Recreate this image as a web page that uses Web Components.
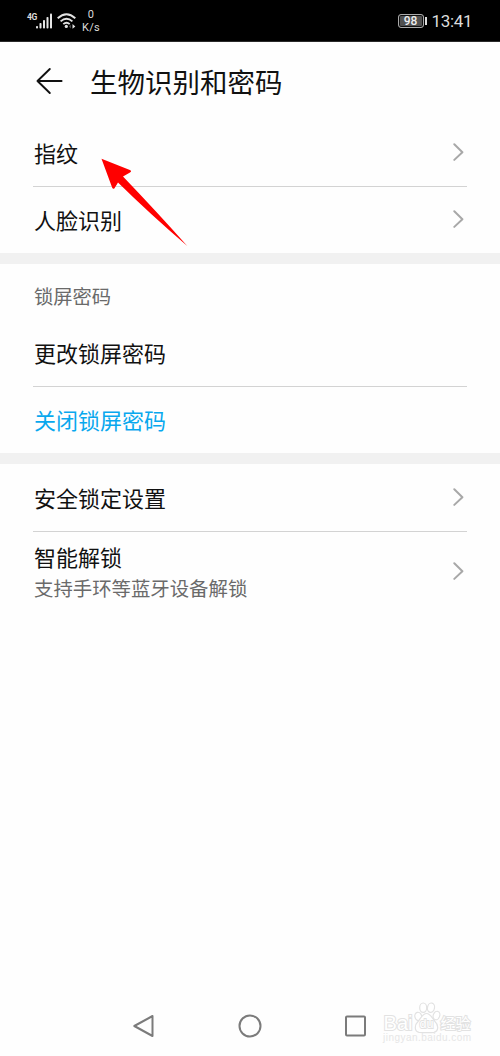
<!DOCTYPE html>
<html lang="zh-CN">
<head>
<meta charset="utf-8">
<title>生物识别和密码</title>
<style>
html,body{margin:0;height:100%}
body{background:#fefefe;font-family:"Noto Sans CJK SC",sans-serif;color:#111;overflow:hidden}
</style>
</head>
<body>
<settings-screen></settings-screen>
<script>
const define = (name, html) => customElements.define(name, class extends HTMLElement {
  constructor() {
    super();
    const t = document.createElement('template');
    t.innerHTML = html;
    this.attachShadow({mode: 'open'}).append(t.content.cloneNode(true));
  }
});

define('status-bar', `<style>
:host{display:flex;box-sizing:border-box;height:42px;flex:none;background:#000;color:#dcdcdc;font-family:Roboto,sans-serif;padding:0 29px 0 27px;justify-content:space-between;border-bottom:1px solid #2a2a2a}
.side{display:flex;align-items:center;height:41px}
.net{display:flex;flex-direction:column;align-items:center;font-size:11px;line-height:13px;margin-left:6px;padding-top:1px;letter-spacing:.3px}
.g{font-size:8.5px;font-weight:700;line-height:10px;align-self:flex-start;margin-top:12px;width:9px;letter-spacing:-.4px}
.sig{margin-top:1px}
.wifi{margin:0 0 0 4px}
.bat{box-sizing:border-box;width:26px;height:14px;border:1px solid #aaa;border-radius:3px;background:#505050;box-shadow:inset 0 0 0 1px #111;font-size:12px;font-weight:500;line-height:12px;text-align:center;color:#eee}
.cap{width:2px;height:8px;background:#ddd;margin:0 5px 0 1px}
.time{font-size:17px;line-height:20px;padding-top:1px;width:39.5px;white-space:nowrap;letter-spacing:-.35px}
</style>
<div class="side"><span class="g">4G</span>
<svg class="sig" width="17" height="18" viewBox="0 0 17 18" fill="#e6e6e6"><rect x="0" y="14" width="2" height="2.5" rx=".8"/><rect x="3.5" y="11" width="2" height="5.5" rx=".8"/><rect x="7" y="8" width="2" height="8.5" rx=".8"/><rect x="10.5" y="5" width="2" height="11.5" rx=".8"/><rect x="14" y="1.5" width="2" height="15" rx=".8"/></svg>
<svg class="wifi" width="19" height="18" viewBox="0 0 19 18" fill="none" stroke="#e2e2e2" stroke-width="1.9"><path d="M.7 6.2Q9.5-1.8 18.3 6.2M3.6 9.4Q9.5 4 15.4 9.4M6.3 12.1Q9.5 9.3 12.7 12.1"/><circle cx="9.3" cy="14.4" r="1.6" fill="#e2e2e2" stroke="none"/><path d="M13.8 12.5v4L12 14.5z" fill="#555" stroke="none"/><path d="M15.5 12l2.8 2.4-2.8 2.4z" fill="#e2e2e2" stroke="none"/></svg>
<div class="net"><span>0</span><span>K/s</span></div></div>
<div class="side"><span class="bat">98</span><span class="cap"></span><span class="time">13:41</span></div>`);

define('title-bar', `<style>
:host{display:flex;height:78px;flex:none;align-items:center;padding-left:36px}
h1{margin:0 0 0 27px;font-size:27.5px;line-height:40px;font-weight:400;color:#111}
</style>
<svg width="27" height="28" viewBox="0 0 27 28" fill="none" stroke="#111" stroke-width="1.9" stroke-linecap="round" stroke-linejoin="round"><path d="M25.6 14H1.5M13.8 2L1.5 14l12.3 12"/></svg>
<h1><slot></slot></h1>`);

define('chevron-icon', `<style>:host{display:block;width:12px;height:18px}svg{display:block}</style>
<svg width="12" height="18" viewBox="0 0 12 18" fill="none" stroke="#a8a8a8" stroke-width="2" stroke-linecap="round" stroke-linejoin="round"><path d="M1.3 1.3L9.4 9.2l-8.1 7.7"/></svg>`);

define('setting-row', `<style>
:host{display:flex;box-sizing:border-box;height:66px;align-items:center;justify-content:space-between;margin:0 33px;padding:0 2px 2px 1px;font-size:22px;line-height:30px}
:host([accent]){color:#08a8ee}
:host([tall]){height:67px}
:host([detail]){height:80px;padding-bottom:0}
.text{display:flex;flex-direction:column}
::slotted([slot=detail]){display:block;margin-top:1px;font-size:19.4px;line-height:32px;color:#6a6a6a}
:host(:not([link])) chevron-icon{display:none}
:host([detail]) chevron-icon{margin-bottom:3px}
</style>
<div class="text"><slot></slot><slot name="detail"></slot></div><chevron-icon></chevron-icon>`);

define('row-divider', `<style>:host{display:block;height:1px;margin:0 33px;background:#d3d3d3}</style>`);
define('section-gap', `<style>:host{display:block;height:11px;background:#f1f1f1}</style>`);
define('section-label', `<style>:host{display:flex;box-sizing:border-box;height:56px;align-items:center;padding:8px 34px 0;font-size:19.3px;line-height:28px;color:#6a6a6a}</style><slot></slot>`);

define('nav-bar', `<style>
:host{display:grid;height:60px;flex:none;grid-template-columns:repeat(3,106px);justify-content:center;align-items:center;justify-items:center}
</style>
<svg width="24" height="26" viewBox="0 0 24 26" fill="none" stroke="#7b7b7b" stroke-width="2" stroke-linejoin="round"><path d="M20.5 3v20L2.3 13z"/></svg>
<svg width="26" height="26" viewBox="0 0 26 26" fill="none" stroke="#7b7b7b" stroke-width="2"><circle cx="13" cy="13" r="10.5"/></svg>
<svg width="24" height="24" viewBox="0 0 24 24" fill="none" stroke="#7b7b7b" stroke-width="2"><rect x="2" y="2.5" width="19" height="19" rx="1"/></svg>`);

define('baidu-mark', `<style>
:host{position:absolute;left:380px;top:998px;width:96px;height:50px}
svg{display:block;overflow:visible}
text{font-family:"Liberation Sans",sans-serif;paint-order:stroke}
</style>
<svg width="96" height="50" viewBox="0 0 96 50" fill="#fff" stroke="#e2e2e2" stroke-width="2">
<text x="3.5" y="31.5" font-size="20" font-weight="400" textLength="29" lengthAdjust="spacingAndGlyphs">Bai</text>
<g stroke-width="1.2"><ellipse cx="38.3" cy="18.5" rx="3.4" ry="4.3" transform="rotate(-15 38.3 18.5)"/><ellipse cx="43.2" cy="9.7" rx="3.5" ry="4.7"/><ellipse cx="51" cy="9.7" rx="3.5" ry="4.7" transform="rotate(12 51 9.7)"/><ellipse cx="56.5" cy="17.5" rx="3.2" ry="4.3" transform="rotate(20 56.5 17.5)"/>
<path d="M46.5 15.500c4 0 6 5 8.500 8 3.5 3.2 4 9.5-1 10.8-4 .6-10 .3-15 0-5-.8-4.5-7.500-1-10.800 2.800-3 4.500-8 8.500-8z"/></g>
<text x="39.5" y="30" font-size="13" font-weight="400" stroke-width="1.8" textLength="14" lengthAdjust="spacingAndGlyphs">du</text>
<text x="60.5" y="31" font-size="15" font-weight="400" stroke-width="2" style="font-family:'Noto Sans CJK SC',sans-serif" textLength="30">经验</text>
<text x="3" y="43" font-size="10" fill="#e6e6e6" stroke="none" textLength="88">jingyan.baidu.com</text></svg>`);

define('pointer-arrow', `<style>:host{position:absolute;left:100px;top:158px}svg{display:block}</style>
<svg width="88" height="89" viewBox="0 0 88 89" fill="#f00"><path d="M1.500.8L30.500 12.300Q32 13.500 30 14.600L23 18.500Q57 54 87.300 88 50 56 18 24.500L14.500 30.200Q13.200 31.500 12.200 29.800z"/></svg>`);

define('settings-screen', `<style>
:host{display:flex;flex-direction:column;height:1056px;position:relative}
main{flex:1}
</style>
<status-bar></status-bar>
<title-bar>生物识别和密码</title-bar>
<main>
<setting-row link>指纹</setting-row><row-divider></row-divider>
<setting-row link>人脸识别</setting-row>
<section-gap></section-gap>
<section-label>锁屏密码</section-label>
<setting-row>更改锁屏密码</setting-row><row-divider></row-divider>
<setting-row accent>关闭锁屏密码</setting-row>
<section-gap></section-gap>
<setting-row link tall>安全锁定设置</setting-row><row-divider></row-divider>
<setting-row link detail>智能解锁<span slot="detail">支持手环等蓝牙设备解锁</span></setting-row>
</main>
<nav-bar></nav-bar>
<baidu-mark></baidu-mark>
<pointer-arrow></pointer-arrow>`);
</script>
</body>
</html>
